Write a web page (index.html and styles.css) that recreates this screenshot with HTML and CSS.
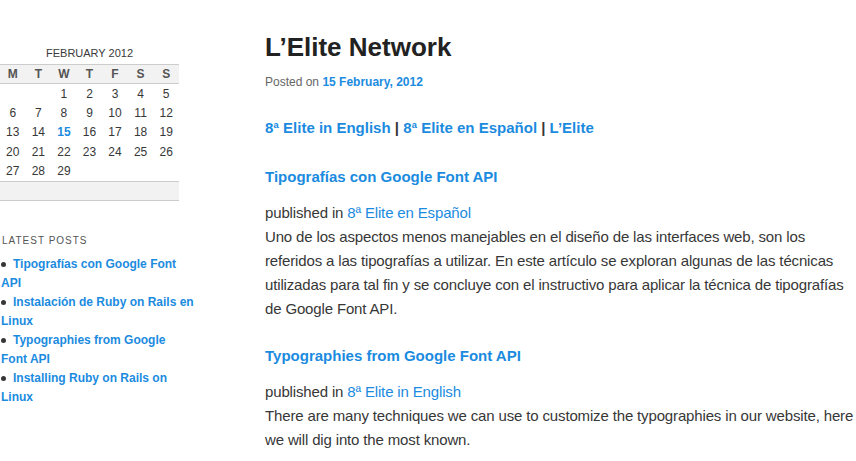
FILE: index.html
```html
<!DOCTYPE html>
<html>
<head>
<meta charset="utf-8">
<link rel="stylesheet" href="styles.css">
</head>
<body>
<div class="page">
  <aside class="sidebar">
    <table class="calendar">
      <caption>FEBRUARY 2012</caption>
      <thead>
        <tr><th>M</th><th>T</th><th>W</th><th>T</th><th>F</th><th>S</th><th>S</th></tr>
      </thead>
      <tbody>
        <tr><td></td><td></td><td>1</td><td>2</td><td>3</td><td>4</td><td>5</td></tr>
        <tr><td>6</td><td>7</td><td>8</td><td>9</td><td>10</td><td>11</td><td>12</td></tr>
        <tr><td>13</td><td>14</td><td class="today">15</td><td>16</td><td>17</td><td>18</td><td>19</td></tr>
        <tr><td>20</td><td>21</td><td>22</td><td>23</td><td>24</td><td>25</td><td>26</td></tr>
        <tr><td>27</td><td>28</td><td>29</td><td></td><td></td><td></td><td></td></tr>
      </tbody>
      <tfoot>
        <tr><td colspan="7"></td></tr>
      </tfoot>
    </table>
    <h3 class="widget-title">Latest Posts</h3>
    <ul class="latest">
      <li><a href="#">Tipografías con Google Font API</a></li>
      <li><a href="#">Instalación de Ruby on Rails en Linux</a></li>
      <li><a href="#">Typographies from Google Font API</a></li>
      <li><a href="#">Installing Ruby on Rails on Linux</a></li>
    </ul>
  </aside>
  <main class="content">
    <h1 class="title">L’Elite Network</h1>
    <div class="meta">Posted on <a href="#">15 February, 2012</a></div>
    <p class="cats"><a href="#">8ª Elite in English</a> | <a href="#">8ª Elite en Español</a> | <a href="#">L’Elite</a></p>
    <h2 class="post-title"><a href="#">Tipografías con Google Font API</a></h2>
    <p class="post">published in <a href="#">8ª Elite en Español</a><br>Uno de los aspectos menos manejables en el diseño de las interfaces web, son los<br>referidos a las tipografías a utilizar. En este artículo se exploran algunas de las técnicas utilizadas para tal fin y se concluye con el instructivo para aplicar la técnica de tipografías de Google Font API.</p>
    <h2 class="post-title"><a href="#">Typographies from Google Font API</a></h2>
    <p class="post">published in <a href="#">8ª Elite in English</a><br>There are many techniques we can use to customize the typographies in our website, here we will dig into the most known.</p>
  </main>
</div>
</body>
</html>
```
FILE: styles.css
```css
html, body {
  margin: 0;
  padding: 0;
  background: #fff;
}
body {
  font-family: "Liberation Sans", Arial, sans-serif;
  color: #373737;
  overflow: hidden;
}
a {
  color: #1b8be0;
  text-decoration: none;
}
.page {
  display: flex;
  align-items: flex-start;
  gap: 71px;
}
.sidebar {
  width: 194px;
  flex: none;
  padding-top: 45px;
}
.calendar {
  width: 179px;
  border-collapse: collapse;
  table-layout: fixed;
  font-size: 12px;
}
.calendar caption {
  font-size: 11px;
  line-height: 16px;
  color: #3a3a3a;
  padding-bottom: 3px;
  text-align: center;
}
.calendar thead th {
  background: #f2f2f2;
  border-top: 1px solid #ccc;
  border-bottom: 1px solid #ccc;
  height: 18px;
  padding: 0;
  font-weight: bold;
  color: #555;
  font-size: 12px;
  text-align: center;
}
.calendar tbody td {
  height: 19.4px;
  padding: 0;
  text-align: center;
  color: #373737;
}
.calendar tbody td.today {
  color: #1b8be0;
  font-weight: bold;
}
.calendar tfoot td {
  background: #f2f2f2;
  border-top: 1px solid #ccc;
  border-bottom: 1px solid #ccc;
  height: 18px;
  padding: 0;
}
.widget-title {
  margin: 33px 0 0 2px;
  font-size: 10px;
  line-height: 14px;
  font-weight: normal;
  text-transform: uppercase;
  letter-spacing: 1px;
  color: #555;
}
.latest {
  list-style: none;
  margin: 7px 0 0;
  padding: 0 0 0 1px;
  font-size: 12px;
  line-height: 19px;
  font-weight: bold;
}
.latest li::before {
  content: "";
  display: inline-block;
  width: 5px;
  height: 5px;
  border-radius: 50%;
  background: #373737;
  margin-right: 7px;
  vertical-align: 1px;
}
.content {
  width: 591px;
  flex: none;
  padding-top: 30px;
}
.title {
  margin: 0;
  font-size: 26px;
  line-height: 34px;
  font-weight: bold;
  color: #222;
}
.meta {
  margin-top: 8px;
  font-size: 12px;
  line-height: 20px;
  color: #666;
}
.meta a {
  font-weight: bold;
}
.cats {
  margin: 24px 0 0;
  font-size: 15px;
  line-height: 24px;
  font-weight: bold;
}
.post-title {
  margin: 25px 0 0;
  font-size: 15px;
  line-height: 24px;
  font-weight: bold;
}
.post {
  margin: 12px 0 0;
  font-size: 15px;
  line-height: 24px;
  letter-spacing: -0.15px;
}
.post + .post-title {
  margin-top: 23px;
}
```
